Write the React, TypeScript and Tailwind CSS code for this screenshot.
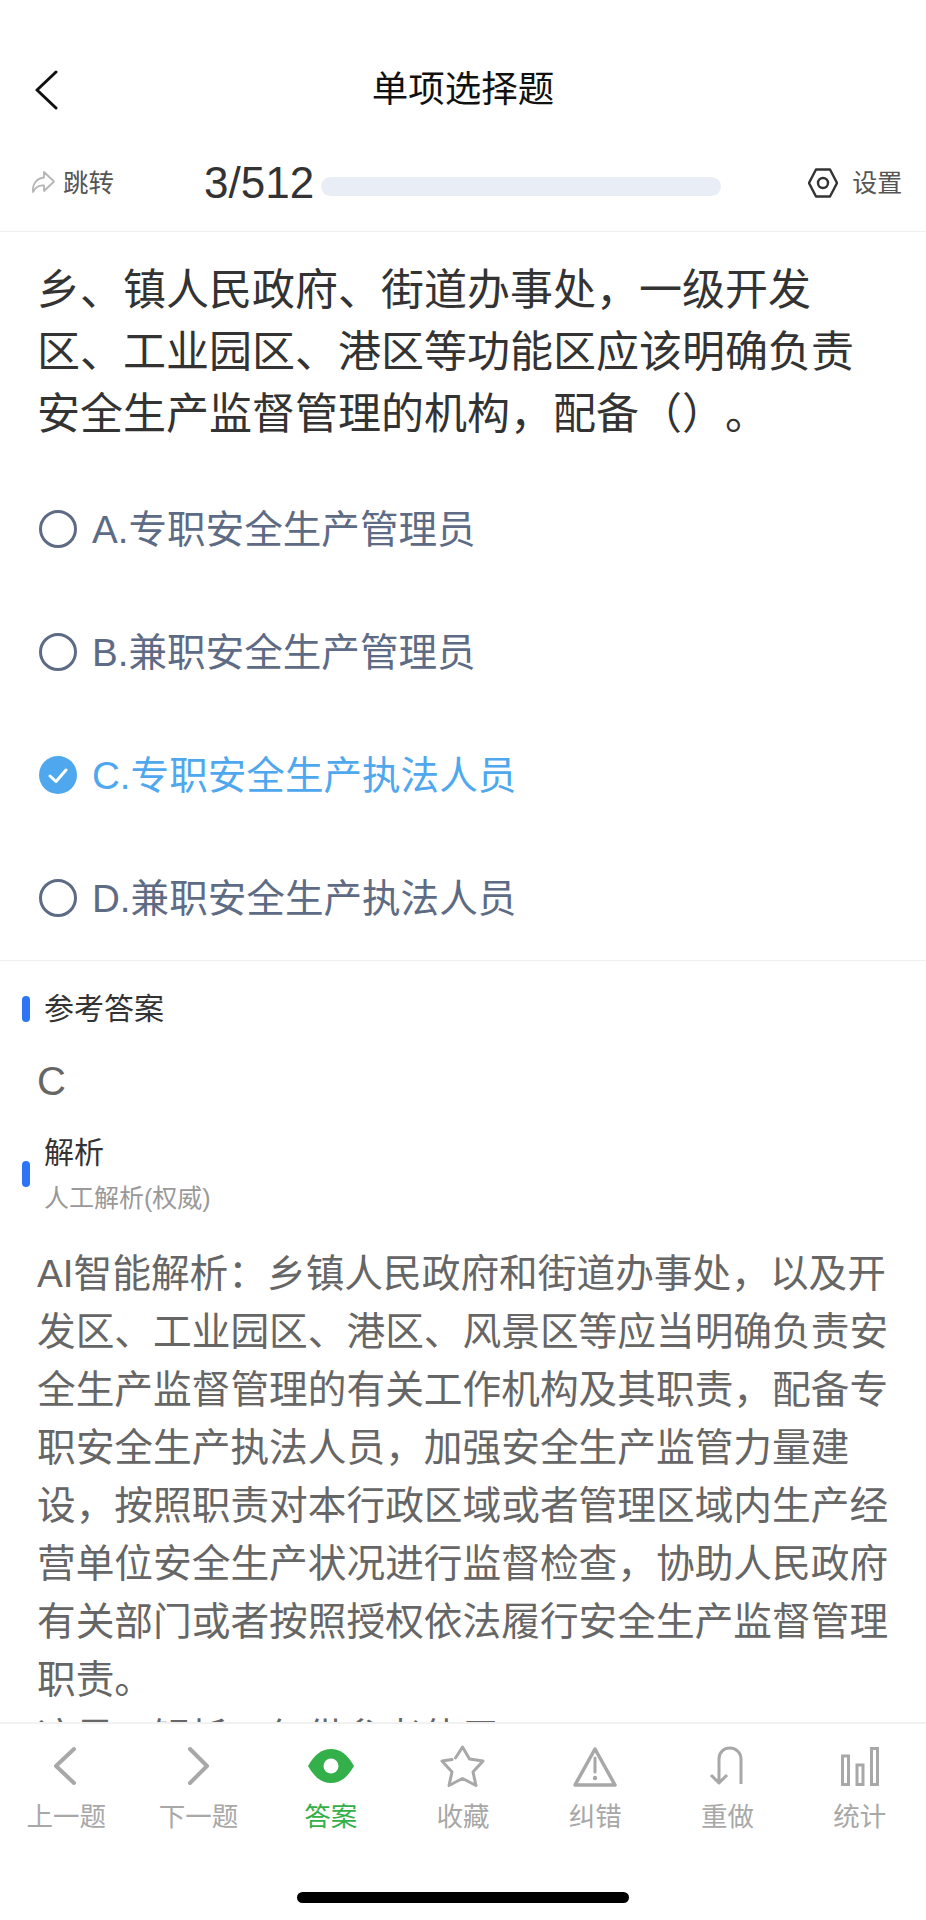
import React from 'react';

const options = [
  { key: 'A', text: 'A.专职安全生产管理员' },
  { key: 'B', text: 'B.兼职安全生产管理员' },
  { key: 'C', text: 'C.专职安全生产执法人员', checked: true },
  { key: 'D', text: 'D.兼职安全生产执法人员' },
];

const tabIcons: Record<string, React.ReactNode> = {
  prev: <path d="M32 4 L14 21 L32 38" fill="none" stroke="#a8a8a8" strokeWidth="4" strokeLinecap="round" strokeLinejoin="round" />,
  next: <path d="M16 4 L33 21 L16 38" fill="none" stroke="#a8a8a8" strokeWidth="4" strokeLinecap="round" strokeLinejoin="round" />,
  eye: (
    <>
      <path d="M1 21 C8 9 15 4 24 4 C33 4 40 9 47 21 C40 33 33 38 24 38 C15 38 8 33 1 21 Z" fill="#34b04a" />
      <circle cx="24" cy="21" r="7.5" fill="#fff" />
    </>
  ),
  star: <path d="M16.5 13 L23.5 2 L30.5 14 L44 16 L34 27 L37 40.5 L23.5 33.5 L10 40.5 L13 27 L3 16 L13 14.5" fill="none" stroke="#a8a8a8" strokeWidth="3" strokeLinejoin="round" strokeLinecap="round" />,
  warn: (
    <>
      <path d="M24 4 L44 40 L4 40 Z" fill="none" stroke="#a8a8a8" strokeWidth="3.5" strokeLinejoin="round" />
      <path d="M24 13 L24 27" stroke="#a8a8a8" strokeWidth="3" strokeLinecap="round" />
      <circle cx="24" cy="33" r="2.2" fill="#a8a8a8" />
    </>
  ),
  redo: <path d="M37 39 L37 14 C37 7 31 3 26 3 C20 3 15 7 15 14 L15 38 M7 30 L15 38 L23 30" fill="none" stroke="#a8a8a8" strokeWidth="3" strokeLinejoin="round" />,
  chart: (
    <>
      <rect x="6.5" y="11" width="6" height="28.5" fill="none" stroke="#a8a8a8" strokeWidth="3" />
      <rect x="21" y="20" width="6" height="19.5" fill="none" stroke="#a8a8a8" strokeWidth="3" />
      <rect x="35.5" y="3.5" width="6" height="36" fill="none" stroke="#a8a8a8" strokeWidth="3" />
    </>
  ),
};

const tabs = [
  { icon: 'prev', label: '上一题' },
  { icon: 'next', label: '下一题' },
  { icon: 'eye', label: '答案', active: true },
  { icon: 'star', label: '收藏' },
  { icon: 'warn', label: '纠错' },
  { icon: 'redo', label: '重做' },
  { icon: 'chart', label: '统计' },
];

const App = () => {
  return (
    <div
      lang="zh-CN"
      className="flex h-[1920px] w-[926px] flex-col overflow-hidden bg-white font-['Liberation_Sans','Noto_Sans_CJK_SC',sans-serif] [text-spacing-trim:space-all]"
    >
      {/* Title bar */}
      <header className="flex h-[140px] shrink-0 items-end pb-[28px]">
        <svg width="24" height="40" viewBox="0 0 24 40" className="ml-[34px] mb-[2px] shrink-0">
          <path d="M22 2 L3 20 L22 38" fill="none" stroke="#111" strokeWidth="3" strokeLinecap="round" strokeLinejoin="round" />
        </svg>
        <h1 className="flex-1 pr-[58px] text-center text-[36.5px] leading-[44px] font-normal text-[#111]">单项选择题</h1>
      </header>

      {/* Progress row */}
      <div className="flex h-[92px] shrink-0 items-center border-b border-[#f0f0f0] pb-[6px]">
        <svg width="26" height="26" viewBox="0 0 26 26" className="ml-[31px] mt-[1px] shrink-0">
          <path d="M13 2 L23 11.5 L13 21 L13 15.5 C8 15 4 18 2 22 C1 14 6 8 13 7.5 Z" fill="none" stroke="#b5b5b5" strokeWidth="1.8" strokeLinejoin="round" />
        </svg>
        <span className="ml-[6px] mt-[1px] text-[25.5px] leading-[32px] text-[#555]">跳转</span>
        <span className="ml-[90px] mt-[1px] text-[44px] leading-[50px] text-[#333]">3/512</span>
        <div className="ml-[7px] mt-[8px] h-[19px] w-[400px] rounded-full bg-[#e9edf6]" />
        <svg width="30" height="30" viewBox="0 0 30 30" className="ml-[87px] mt-[1px] shrink-0">
          <path d="M8 1.5 L22 1.5 L29 15 L22 28.5 L8 28.5 L1 15 Z" fill="none" stroke="#333" strokeWidth="2.4" strokeLinejoin="round" />
          <circle cx="15" cy="15" r="5" fill="none" stroke="#333" strokeWidth="2.4" />
        </svg>
        <span className="ml-[14px] mt-[1px] text-[25px] leading-[32px] text-[#555]">设置</span>
      </div>

      {/* Scrolling content, clipped by the tab bar */}
      <main className="min-h-0 flex-1 overflow-hidden">
        <p className="mx-[37px] mt-[27px] text-[43px] leading-[62px] text-[#333]">
          乡、镇人民政府、街道办事处，一级开发区、工业园区、港区等功能区应该明确负责安全生产监督管理的机构，配备（）。
        </p>

        <ul className="mt-[22px] border-b border-[#f0f0f0]">
          {options.map((o) => (
            <li key={o.key} className="flex h-[123.25px] items-center pl-[39px]">
              {o.checked ? (
                <svg width="38" height="38" viewBox="0 0 38 38" className="shrink-0">
                  <circle cx="19" cy="19" r="19" fill="#4fa8ee" />
                  <path d="M11 20 L17 25.5 L27 14" fill="none" stroke="#fff" strokeWidth="3" strokeLinecap="round" strokeLinejoin="round" />
                </svg>
              ) : (
                <span className="size-[38px] shrink-0 rounded-full border-[3px] border-[#5e6b85]" />
              )}
              <span className={`ml-[15px] mt-[2px] text-[38.6px] leading-[48px] ${o.checked ? 'text-[#4fa8ee]' : 'text-[#5e6b85]'}`}>{o.text}</span>
            </li>
          ))}
        </ul>

        <div className="mt-[28px] flex items-center pl-[22px]">
          <span className="h-[26px] w-[8px] rounded-full bg-[#2c76f6]" />
          <span className="ml-[14px] text-[30px] leading-[40px] text-[#333]">参考答案</span>
        </div>
        <p className="ml-[37px] mt-[28px] text-[40px] leading-[48px] text-[#666]">C</p>

        <div className="mt-[28px] flex items-center pl-[22px]">
          <span className="h-[26px] w-[8px] rounded-full bg-[#2c76f6]" />
          <div className="ml-[14px]">
            <p className="text-[30px] leading-[40px] text-[#333]">解析</p>
            <p className="mt-[9px] text-[25px] leading-[32px] text-[#999]">人工解析(权威)</p>
          </div>
        </div>

        <p className="mx-[37px] mt-[31px] text-[38.7px] leading-[58px] text-[#666]">
          AI智能解析：乡镇人民政府和街道办事处，以及开发区、工业园区、港区、风景区等应当明确负责安全生产监督管理的有关工作机构及其职责，配备专职安全生产执法人员，加强安全生产监管力量建设，按照职责对本行政区域或者管理区域内生产经营单位安全生产状况进行监督检查，协助人民政府有关部门或者按照授权依法履行安全生产监督管理职责。
          <br />
          这是AI解析，仅供参考使用。
        </p>
      </main>

      {/* Tab bar */}
      <nav className="h-[198px] shrink-0 border-t-[2px] border-[#f1f1f1] bg-white">
        <div className="grid grid-cols-7 pt-[21px]">
          {tabs.map((t) => (
            <div key={t.label} className="flex flex-col items-center">
              <svg width="48" height="44" viewBox="0 0 48 44" className="shrink-0">
                {tabIcons[t.icon]}
              </svg>
              <span className={`mt-[11px] text-[26.5px] leading-[34px] ${t.active ? 'text-[#34b04a]' : 'text-[#a8a8a8]'}`}>{t.label}</span>
            </div>
          ))}
        </div>
        <div className="mx-auto mt-[58px] h-[11px] w-[332px] rounded-full bg-black" />
      </nav>
    </div>
  );
};

export default App;
